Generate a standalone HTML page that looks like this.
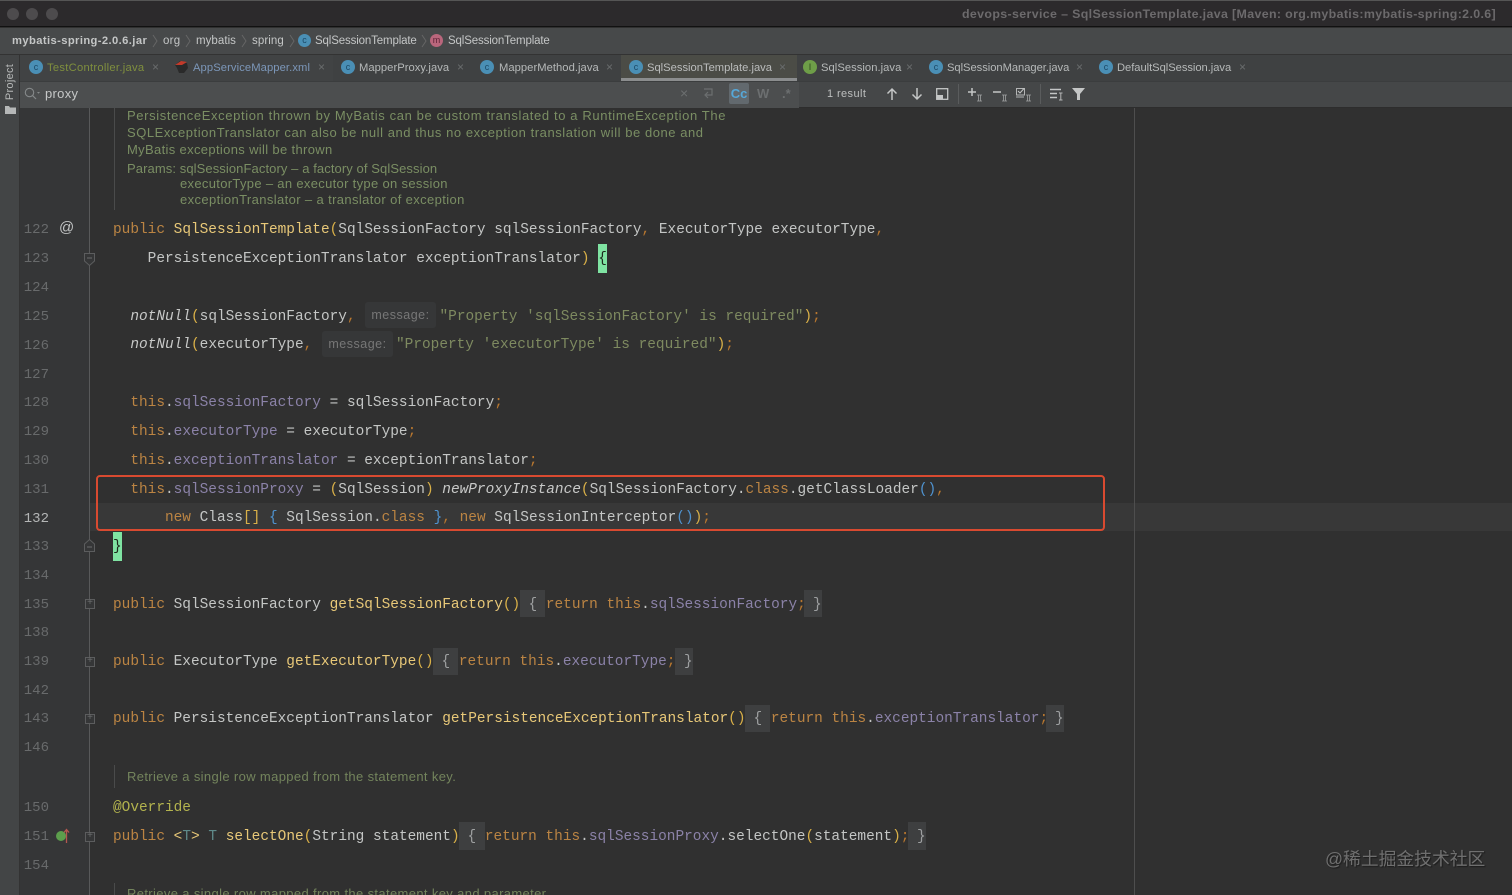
<!DOCTYPE html>
<html>
<head>
<meta charset="utf-8">
<style>
*{box-sizing:border-box}
html,body{margin:0;padding:0;width:1512px;height:895px;overflow:hidden;background:#303030}
body{position:relative;font-family:"Liberation Sans","Noto Sans CJK SC",sans-serif}
.a{position:absolute}
#title{left:0;top:0;width:1512px;height:27px;background:#2c2a2c;border-top:1px solid #555;border-bottom:1px solid #111}
.dot{position:absolute;top:7px;width:12px;height:12px;border-radius:50%;background:#4d4b4d}
#ttext{left:962px;top:5px;font-size:12.4px;font-weight:bold;color:#6c6a6c;white-space:pre;letter-spacing:.36px;line-height:16px}
#crumb{left:0;top:28px;width:1512px;height:27px;background:#47494a;border-bottom:1px solid #333}
.c{position:absolute;top:5px;font-size:11.5px;line-height:16px;color:#c4c6c6;white-space:pre;letter-spacing:.25px}
.sep{position:absolute;top:6px;width:6px;height:14px}
#side{left:0;top:55px;width:20px;height:840px;background:#434546;border-right:1px solid #333}
#proj{left:-11px;top:75px;width:42px;height:14px;font-size:11px;line-height:14px;color:#b8baba;transform:rotate(-90deg);text-align:center;letter-spacing:.3px}
#tabs{left:20px;top:55px;width:1492px;height:26px;background:#3f4142}
.tab{position:absolute;top:5px;font-size:11.2px;line-height:16px;color:#b6b9b9;white-space:pre;letter-spacing:.05px}
.x{position:absolute;top:4px;font-size:12px;line-height:16px;color:#6a6d6e}
.ic{position:absolute;top:5px;width:14px;height:14px;border-radius:50%;background:#4a8fb5;color:#1c4a68;font-size:9px;line-height:14px;text-align:center}
#find{left:20px;top:81px;width:1492px;height:27px;background:#454748;border-top:1px solid #3b3d3e;border-bottom:1px solid #2d2d2d}
#fleft{left:20px;top:82px;width:779px;height:26px;background:#4c4e4f}
#gut{left:20px;top:108px;width:70px;height:787px;background:#353637}
#gl{left:89px;top:108px;width:1px;height:787px;background:#58595a}
#rm{left:1134px;top:108px;width:1px;height:787px;background:#4e4e4e}
#cur{left:90px;top:503px;width:1422px;height:28px;background:#383838}
.ln{position:absolute;left:20px;width:29px;text-align:right;font:14px/29px "Liberation Mono",monospace;color:#686a6b;height:29px}
.l{position:absolute;left:113px;height:29px;font:14.45px/29px "Liberation Mono",monospace;color:#c4c6c5;white-space:pre}
.k{color:#bb8443}.m{color:#e8c878}.f{color:#8b82a8}.s{color:#7e8a60}.p{color:#d9b048}.o{color:#b8772f}.i{font-style:italic;color:#c8c9c8}.b{color:#4f93d0}.g{color:#9d9fa0}
.hl{background:#3e3f40}
.hint{position:absolute;height:26px;background:#363738;border-radius:3px;font:12.5px/27px "Liberation Sans",sans-serif;color:#777;text-align:center;letter-spacing:.5px}
.gb{background:#7fe3a2;color:#1c2a1c;display:inline-block;height:29px;vertical-align:top;line-height:31px;position:relative;top:-1px}
.doc{position:absolute;left:127px;font-size:13px;line-height:17px;color:#7a8e63;white-space:pre;letter-spacing:.36px}
.dbar{position:absolute;left:113.5px;width:1.5px;background:#4a4b4b}
.fold{position:absolute;left:85px;width:10px;height:10px;border:1px solid #5c5d5e;background:#353637;color:#6b6c6d;font:10px/8px "Liberation Mono",monospace;text-align:center}
#red{left:96px;top:475px;width:1009px;height:56px;border:2.4px solid #d94a30;border-radius:4px}
#wm{left:1325px;top:847px;font-size:17.8px;line-height:24px;color:#6f6f6f;white-space:pre;text-shadow:1px 1px 1px #1c1c1c}
svg{position:absolute;overflow:visible}
</style>
</head>
<body>
<div class="a" id="title">
<span class="dot" style="left:7px"></span><span class="dot" style="left:26px"></span><span class="dot" style="left:46px"></span>
<div class="a" id="ttext">devops-service – SqlSessionTemplate.java [Maven: org.mybatis:mybatis-spring:2.0.6]</div>
</div>

<div class="a" id="crumb">
<span class="c" style="left:12px;font-weight:bold;font-size:11.2px;letter-spacing:.4px">mybatis-spring-2.0.6.jar</span>
<svg class="sep" style="left:152px;top:6px" width="6" height="14"><path d="M1 1L5 7L1 13" fill="none" stroke="#666" stroke-width="1"/></svg>
<span class="c" style="left:163px">org</span>
<svg class="sep" style="left:185px;top:6px" width="6" height="14"><path d="M1 1L5 7L1 13" fill="none" stroke="#666" stroke-width="1"/></svg>
<span class="c" style="left:196px;letter-spacing:.05px">mybatis</span>
<svg class="sep" style="left:241px;top:6px" width="6" height="14"><path d="M1 1L5 7L1 13" fill="none" stroke="#666" stroke-width="1"/></svg>
<span class="c" style="left:252px;letter-spacing:.1px">spring</span>
<svg class="sep" style="left:289px;top:6px" width="6" height="14"><path d="M1 1L5 7L1 13" fill="none" stroke="#666" stroke-width="1"/></svg>
<span class="ic" style="left:298px;top:6px;width:13px;height:13px;line-height:13px">c</span>
<span class="c" style="left:315px;letter-spacing:-.14px">SqlSessionTemplate</span>
<svg class="sep" style="left:421px;top:6px" width="6" height="14"><path d="M1 1L5 7L1 13" fill="none" stroke="#666" stroke-width="1"/></svg>
<span class="ic" style="left:430px;top:6px;width:13px;height:13px;line-height:12px;background:#b9667c;color:#5c2236">m</span>
<span class="c" style="left:448px;letter-spacing:-.14px">SqlSessionTemplate</span>
</div>

<div class="a" id="side"></div>
<div class="a" id="proj">Project</div>
<svg style="left:5px;top:105px" width="11" height="9"><path d="M0 1H4L5 2.500H11V9H0Z" fill="#b5b7b7"/></svg>

<div class="a" id="tabs">
<div class="a" style="left:0;top:0;width:313px;height:26px;background:#414344"></div>
<div class="a" style="left:601px;top:0;width:176px;height:26px;background:#4b4c46"></div>
<div class="a" style="left:601px;top:23px;width:176px;height:3px;background:#8b8d8e"></div>
<span class="ic" style="left:9px">c</span><span class="tab" style="left:27px;color:#7f8f3e;letter-spacing:.28px">TestController.java</span><span class="x" style="left:132px">×</span>
<svg style="left:154px;top:5px" width="15" height="15"><path d="M1 5L6 1L13 3L14 8L10 13H5L3 8Z" fill="#2a2a2a"/><path d="M1 5L7 1L13 2L8 5Z" fill="#c23a2a"/></svg>
<span class="tab" style="left:173px;color:#7c97b9;letter-spacing:.1px">AppServiceMapper.xml</span><span class="x" style="left:298px">×</span>
<span class="ic" style="left:321px">c</span><span class="tab" style="left:339px">MapperProxy.java</span><span class="x" style="left:437px">×</span>
<span class="ic" style="left:460px">c</span><span class="tab" style="left:479px">MapperMethod.java</span><span class="x" style="left:586px">×</span>
<span class="ic" style="left:609px">c</span><span class="tab" style="left:627px;color:#bbbdbd;letter-spacing:0">SqlSessionTemplate.java</span><span class="x" style="left:759px">×</span>
<span class="ic" style="left:783px;background:#6e9e48;color:#2c4a1c">I</span><span class="tab" style="left:801px">SqlSession.java</span><span class="x" style="left:886px">×</span>
<span class="ic" style="left:909px">c</span><span class="tab" style="left:927px;letter-spacing:-.04px">SqlSessionManager.java</span><span class="x" style="left:1056px">×</span>
<span class="ic" style="left:1079px">c</span><span class="tab" style="left:1097px;letter-spacing:-.04px">DefaultSqlSession.java</span><span class="x" style="left:1219px">×</span>
</div>

<div class="a" id="find"></div>
<div class="a" id="fleft"></div>
<svg style="left:24px;top:87px" width="16" height="13"><circle cx="5.500" cy="5.500" r="4.200" fill="none" stroke="#85898a" stroke-width="1.100"/><path d="M8.500 8.500L12 12" stroke="#85898a" stroke-width="1.200"/><path d="M13 5h3l-1.500 1.800z" fill="#85898a"/></svg>
<div class="a" style="left:45px;top:85px;font-size:13px;line-height:17px;color:#c6c8c8;letter-spacing:.3px">proxy</div>
<div class="a" style="left:680px;top:85px;font-size:14px;line-height:17px;color:#6c6f70">×</div>
<svg style="left:702px;top:87px" width="12" height="13"><path d="M2 2H10V8H4M6 5L3 8L6 11" fill="none" stroke="#6c6f70" stroke-width="1.200"/></svg>
<div class="a" style="left:729px;top:83px;width:20px;height:21px;background:#62696e;border-radius:2px;font-size:13px;font-weight:bold;line-height:21px;text-align:center;color:#56a8d8">Cc</div>
<div class="a" style="left:757px;top:85px;font-size:13px;font-weight:bold;line-height:17px;color:#6c6f70">W</div>
<div class="a" style="left:782px;top:85px;font-size:13px;font-weight:bold;line-height:17px;color:#6c6f70">.*</div>
<div class="a" style="left:827px;top:86px;font-size:11px;line-height:16px;color:#bdbfbf;letter-spacing:.4px">1 result</div>
<svg style="left:886px;top:87px" width="12" height="14"><path d="M6 13V2M1.500 6.500L6 2L10.500 6.500" fill="none" stroke="#c4c6c6" stroke-width="1.500"/></svg>
<svg style="left:911px;top:87px" width="12" height="14"><path d="M6 1V12M1.500 7.500L6 12L10.500 7.500" fill="none" stroke="#c4c6c6" stroke-width="1.500"/></svg>
<svg style="left:936px;top:88px" width="13" height="12"><rect x=".7" y=".7" width="11" height="10.600" fill="none" stroke="#c4c6c6" stroke-width="1.300"/><rect x="1" y="7" width="6" height="4" fill="#c4c6c6"/></svg>
<div class="a" style="left:958px;top:84px;width:1px;height:20px;background:#5a5c5d"></div>
<svg style="left:967px;top:87px" width="16" height="15"><path d="M5 1V9M1 5H9" stroke="#c4c6c6" stroke-width="1.500"/><path d="M10 8h5M10 14h5M11.500 8v6M13.500 8v6" stroke="#a0a2a2" stroke-width=".8"/></svg>
<svg style="left:992px;top:87px" width="16" height="15"><path d="M1 5H9" stroke="#c4c6c6" stroke-width="1.500"/><path d="M10 8h5M10 14h5M11.500 8v6M13.500 8v6" stroke="#a0a2a2" stroke-width=".8"/></svg>
<svg style="left:1016px;top:87px" width="16" height="15"><rect x=".5" y="1.500" width="8" height="6.500" fill="none" stroke="#b4b6b6"/><path d="M2 4L4 6L8 1.500" fill="none" stroke="#c4c6c6"/><path d="M0 10H8" stroke="#b4b6b6"/><path d="M10 8h5M10 14h5M11.500 8v6M13.500 8v6" stroke="#a0a2a2" stroke-width=".8"/></svg>
<div class="a" style="left:1040px;top:84px;width:1px;height:20px;background:#5a5c5d"></div>
<svg style="left:1049px;top:88px" width="14" height="13"><path d="M1 1.500H12M1 5.500H8M1 9.500H8" stroke="#c4c6c6" stroke-width="1.500"/><path d="M10 5H13.500M11.800 5V12M10 12H13.500" stroke="#b4b6b6" stroke-width="1"/></svg>
<svg style="left:1072px;top:88px" width="13" height="12"><path d="M0 0H13L8 6V12H5V6Z" fill="#c4c6c6"/></svg>

<div class="a" id="gut"></div>
<div class="a" id="cur"></div>
<div class="a" id="gl"></div>
<div class="a" id="rm"></div>

<div class="dbar" style="top:108px;height:102px"></div>
<div class="doc" style="top:107px;letter-spacing:.62px">PersistenceException thrown by MyBatis can be custom translated to a RuntimeException The</div>
<div class="doc" style="top:124px;letter-spacing:.55px">SQLExceptionTranslator can also be null and thus no exception translation will be done and</div>
<div class="doc" style="top:141px;letter-spacing:.34px">MyBatis exceptions will be thrown</div>
<div class="doc" style="top:160px;letter-spacing:.09px">Params: sqlSessionFactory – a factory of SqlSession</div>
<div class="doc" style="top:175px;left:180px;letter-spacing:.32px">executorType – an executor type on session</div>
<div class="doc" style="top:191px;left:180px;letter-spacing:.38px">exceptionTranslator – a translator of exception</div>

<div class="ln" style="top:216px">122</div>
<div class="ln" style="top:245px">123</div>
<div class="ln" style="top:274px">124</div>
<div class="ln" style="top:303px">125</div>
<div class="ln" style="top:332px">126</div>
<div class="ln" style="top:361px">127</div>
<div class="ln" style="top:389px">128</div>
<div class="ln" style="top:418px">129</div>
<div class="ln" style="top:447px">130</div>
<div class="ln" style="top:476px">131</div>
<div class="ln" style="top:505px;color:#b4b6b6">132</div>
<div class="ln" style="top:533px">133</div>
<div class="ln" style="top:562px">134</div>
<div class="ln" style="top:591px">135</div>
<div class="ln" style="top:619px">138</div>
<div class="ln" style="top:648px">139</div>
<div class="ln" style="top:677px">142</div>
<div class="ln" style="top:705px">143</div>
<div class="ln" style="top:734px">146</div>
<div class="ln" style="top:794px">150</div>
<div class="ln" style="top:823px">151</div>
<div class="ln" style="top:852px">154</div>

<div class="a" style="left:59px;top:219px;font:15px/18px 'Liberation Sans',sans-serif;color:#c2c4c4">@</div>
<svg style="left:84px;top:253px" width="11" height="13"><path d="M.5.500H10.500V8L5.500 12.500L.5 8Z" fill="#353637" stroke="#5c5d5e"/><path d="M3 5H8" stroke="#6b6c6d"/></svg>
<svg style="left:84px;top:539px" width="11" height="13"><path d="M.5 12.500H10.500V5L5.500.5L.5 5Z" fill="#353637" stroke="#5c5d5e"/><path d="M3 8H8" stroke="#6b6c6d"/></svg>
<div class="fold" style="top:599px">+</div>
<div class="fold" style="top:657px">+</div>
<div class="fold" style="top:714px">+</div>
<div class="fold" style="top:832px">+</div>
<div class="a" style="left:56px;top:831px;width:10px;height:10px;border-radius:50%;background:#5c9e4c"></div>
<svg style="left:63px;top:828px" width="7" height="16"><path d="M3.500 15V2M1 4.500L3.500 1.500L6 4.500" fill="none" stroke="#b4584f" stroke-width="1.300"/></svg>

<div class="l" style="top:216px"><span class="k">public</span> <span class="m">SqlSessionTemplate</span><span class="p">(</span>SqlSessionFactory sqlSessionFactory<span class="o">,</span> ExecutorType executorType<span class="o">,</span></div>
<div class="l" style="top:245px">    PersistenceExceptionTranslator exceptionTranslator<span class="p">)</span> <span class="gb">{</span></div>
<div class="l" style="top:303px">  <span class="i">notNull</span><span class="p">(</span>sqlSessionFactory<span class="o">,</span></div>
<div class="hint" style="left:365px;top:302px;width:71px">message:</div>
<div class="l" style="top:303px;left:439.500px"><span class="s">"Property 'sqlSessionFactory' is required"</span><span class="p">)</span><span class="o">;</span></div>
<div class="l" style="top:331px">  <span class="i">notNull</span><span class="p">(</span>executorType<span class="o">,</span></div>
<div class="hint" style="left:322px;top:331px;width:71px">message:</div>
<div class="l" style="top:331px;left:396px"><span class="s">"Property 'executorType' is required"</span><span class="p">)</span><span class="o">;</span></div>
<div class="l" style="top:389px">  <span class="k">this</span>.<span class="f">sqlSessionFactory</span> = sqlSessionFactory<span class="o">;</span></div>
<div class="l" style="top:418px">  <span class="k">this</span>.<span class="f">executorType</span> = executorType<span class="o">;</span></div>
<div class="l" style="top:447px">  <span class="k">this</span>.<span class="f">exceptionTranslator</span> = exceptionTranslator<span class="o">;</span></div>
<div class="l" style="top:476px">  <span class="k">this</span>.<span class="f">sqlSessionProxy</span> = <span class="p">(</span>SqlSession<span class="p">)</span> <span class="i">newProxyInstance</span><span class="p">(</span>SqlSessionFactory.<span class="k">class</span>.getClassLoader<span class="b">()</span><span class="o">,</span></div>
<div class="l" style="top:504px">      <span class="k">new</span> Class<span class="p">[]</span> <span class="b">{</span> SqlSession.<span class="k">class</span> <span class="b">}</span><span class="o">,</span> <span class="k">new</span> SqlSessionInterceptor<span class="b">()</span><span class="p">)</span><span class="o">;</span></div>
<div class="l" style="top:533px"><span class="gb">}</span></div>
<div class="l" style="top:591px"><span class="k">public</span> SqlSessionFactory <span class="m">getSqlSessionFactory</span><span class="p">()</span></div>
<div class="hl a" style="left:520px;top:590px;width:25px;height:27px"></div><div class="hl a" style="left:804px;top:590px;width:18px;height:27px"></div>
<div class="l" style="top:591px;left:528.500px"><span class="g">{</span> <span class="k">return</span> <span class="k">this</span>.<span class="f">sqlSessionFactory</span><span class="o">;</span></div>
<div class="l" style="top:591px;left:813px"><span class="g">}</span></div>
<div class="l" style="top:648px"><span class="k">public</span> ExecutorType <span class="m">getExecutorType</span><span class="p">()</span></div>
<div class="hl a" style="left:433px;top:648px;width:25px;height:27px"></div><div class="hl a" style="left:675px;top:648px;width:18px;height:27px"></div>
<div class="l" style="top:648px;left:441.500px"><span class="g">{</span> <span class="k">return</span> <span class="k">this</span>.<span class="f">executorType</span><span class="o">;</span></div>
<div class="l" style="top:648px;left:684px"><span class="g">}</span></div>
<div class="l" style="top:705px"><span class="k">public</span> PersistenceExceptionTranslator <span class="m">getPersistenceExceptionTranslator</span><span class="p">()</span></div>
<div class="hl a" style="left:745px;top:705px;width:25px;height:27px"></div><div class="hl a" style="left:1046px;top:705px;width:18px;height:27px"></div>
<div class="l" style="top:705px;left:753.500px"><span class="g">{</span> <span class="k">return</span> <span class="k">this</span>.<span class="f">exceptionTranslator</span><span class="o">;</span></div>
<div class="l" style="top:705px;left:1055px"><span class="g">}</span></div>

<div class="dbar" style="top:765px;height:23px"></div>
<div class="doc" style="top:768px;color:#73845c;letter-spacing:.36px">Retrieve a single row mapped from the statement key.</div>
<div class="l" style="top:794px;color:#b3b34e">@Override</div>
<div class="l" style="top:823px"><span class="k">public</span> <span class="m">&lt;</span><span style="color:#5f8a8a">T</span><span class="m">&gt;</span> <span style="color:#5f8a8a">T</span> <span class="m">selectOne</span><span class="p">(</span>String statement<span class="p">)</span></div>
<div class="hl a" style="left:459px;top:822px;width:26px;height:28px"></div><div class="hl a" style="left:908px;top:822px;width:18px;height:28px"></div>
<div class="l" style="top:823px;left:467.500px"><span class="g">{</span> <span class="k">return</span> <span class="k">this</span>.<span class="f">sqlSessionProxy</span>.selectOne<span class="p">(</span>statement<span class="p">)</span><span class="o">;</span></div>
<div class="l" style="top:823px;left:917px"><span class="g">}</span></div>

<div class="dbar" style="top:883px;height:12px"></div>
<div class="doc" style="top:885px;color:#73845c;letter-spacing:.36px">Retrieve a single row mapped from the statement key and parameter.</div>

<div class="a" id="red"></div>
<div class="a" id="wm">@稀土掘金技术社区</div>
</body>
</html>
